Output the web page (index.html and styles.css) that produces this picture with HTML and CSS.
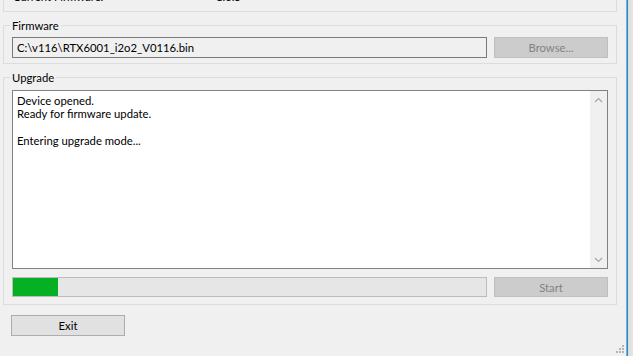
FILE: index.html
```html
<!DOCTYPE html>
<html lang="en">
<head>
  <meta charset="UTF-8">
  <title>Firmware Upgrade</title>
  <link rel="stylesheet" href="styles.css">
</head>
<body>
  <div class="window">
    <div class="dialog">

      <!-- Device info (scrolled mostly out of view) -->
      <div class="group info">
        <span class="info-label">Current Firmware:</span>
        <span class="info-value">1.0.5</span>
      </div>

      <!-- Firmware file -->
      <fieldset class="group">
        <legend>Firmware</legend>
        <div class="row">
          <div class="field">C:\v116\RTX6001_i2o2_V0116.bin</div>
          <button class="button disabled">Browse...</button>
        </div>
      </fieldset>

      <!-- Upgrade log + progress -->
      <fieldset class="group upgrade">
        <legend>Upgrade</legend>
        <div class="log">
          <div class="log-text">Device opened.<br>Ready for firmware update.<br><br>Entering upgrade mode...</div>
          <div class="scrollbar">
            <svg width="9" height="6" viewBox="0 0 9 6"><path d="M1 5 L4.5 1.5 L8 5" fill="none" stroke="#a6a6a6" stroke-width="1.2"/></svg>
            <svg width="9" height="6" viewBox="0 0 9 6"><path d="M1 1 L4.5 4.5 L8 1" fill="none" stroke="#a6a6a6" stroke-width="1.2"/></svg>
          </div>
        </div>
        <div class="row progress-row">
          <div class="progress"><div class="progress-fill" style="width: 9.5%"></div></div>
          <button class="button disabled">Start</button>
        </div>
      </fieldset>

      <button class="button exit">Exit</button>
    </div>
    <div class="frame-edge"></div>

    <!-- size grip -->
    <svg class="grip" width="9" height="9" viewBox="0 0 9 9">
      <rect x="6" y="0" width="2" height="2" fill="#b4b4b4"/>
      <rect x="3" y="3" width="2" height="2" fill="#b4b4b4"/>
      <rect x="6" y="3" width="2" height="2" fill="#b4b4b4"/>
      <rect x="0" y="6" width="2" height="2" fill="#b4b4b4"/>
      <rect x="3" y="6" width="2" height="2" fill="#b4b4b4"/>
      <rect x="6" y="6" width="2" height="2" fill="#b4b4b4"/>
    </svg>
  </div>
</body>
</html>
```

FILE: styles.css
```css
body {
  margin: 0;
  padding: 0;
  background: #f0f0f0;
  font-family: Lato, 'Open Sans', sans-serif;
  font-size: 11.3px;
  color: #000;
  overflow: hidden;
}
.window {
  position: relative;
  display: flex;
  width: 633px;
  height: 356px;
}
.dialog {
  width: 627px;
  padding-left: 3px;
  box-sizing: border-box;
}
.frame-edge {
  width: 6px;
  height: 100%;
  border-left: 1px solid #6fb3e3;
  background: linear-gradient(to right, #2f86c6 0, #2f86c6 1px, #dcdcdc 1px, #e6e6e6 100%);
}
.group {
  width: 614px;
  box-sizing: border-box;
  border: 1px solid #dcdcdc;
  margin: 0;
  padding: 4px 8px 5px 8px;
  min-width: 0;
}
.group legend {
  margin-left: -2px;
  padding: 0 2px;
  line-height: 15px;
}
.info {
  display: flex;
  border-top: none;
  margin-top: -11px;
  padding: 0 8px 7px 9px;
  line-height: 15px;
}
.info-label {
  width: 203px;
}
.group + fieldset.group {
  margin-top: 6px;
}
fieldset.upgrade {
  margin-top: 7px;
  padding-top: 5px;
  padding-bottom: 7px;
}
.row {
  display: flex;
  gap: 7px;
}
.field {
  width: 475px;
  height: 21px;
  box-sizing: border-box;
  border: 1px solid #7a7a7a;
  background: #f0f0f0;
  padding: 0 4px;
  line-height: 19px;
  white-space: nowrap;
}
.button {
  width: 114px;
  height: 21px;
  box-sizing: border-box;
  border: 1px solid #adadad;
  background: #e1e1e1;
  font-family: inherit;
  font-size: 11.3px;
  color: #000;
  padding: 0;
}
.button.disabled {
  background: #cccccc;
  border-color: #bfbfbf;
  color: #838383;
}
.log {
  display: flex;
  height: 179px;
  box-sizing: border-box;
  border: 1px solid #828282;
  background: #fff;
}
.log-text {
  flex: 1;
  padding: 3px 4px;
  line-height: 13.33px;
}
.scrollbar {
  width: 17px;
  background: #f0f0f0;
  display: flex;
  flex-direction: column;
  justify-content: space-between;
  align-items: center;
  padding: 6px 0 5px;
  box-sizing: border-box;
}
.progress-row {
  margin-top: 8px;
}
.progress-row .button {
  height: 20px;
}
.progress {
  width: 475px;
  height: 20px;
  box-sizing: border-box;
  border: 1px solid #bcbcbc;
  background: #e6e6e6;
}
.progress-fill {
  height: 100%;
  background: #06b025;
}
.exit {
  margin-top: 10px;
  margin-left: 8px;
  display: block;
}
.grip {
  position: absolute;
  left: 616px;
  top: 345px;
}
```
